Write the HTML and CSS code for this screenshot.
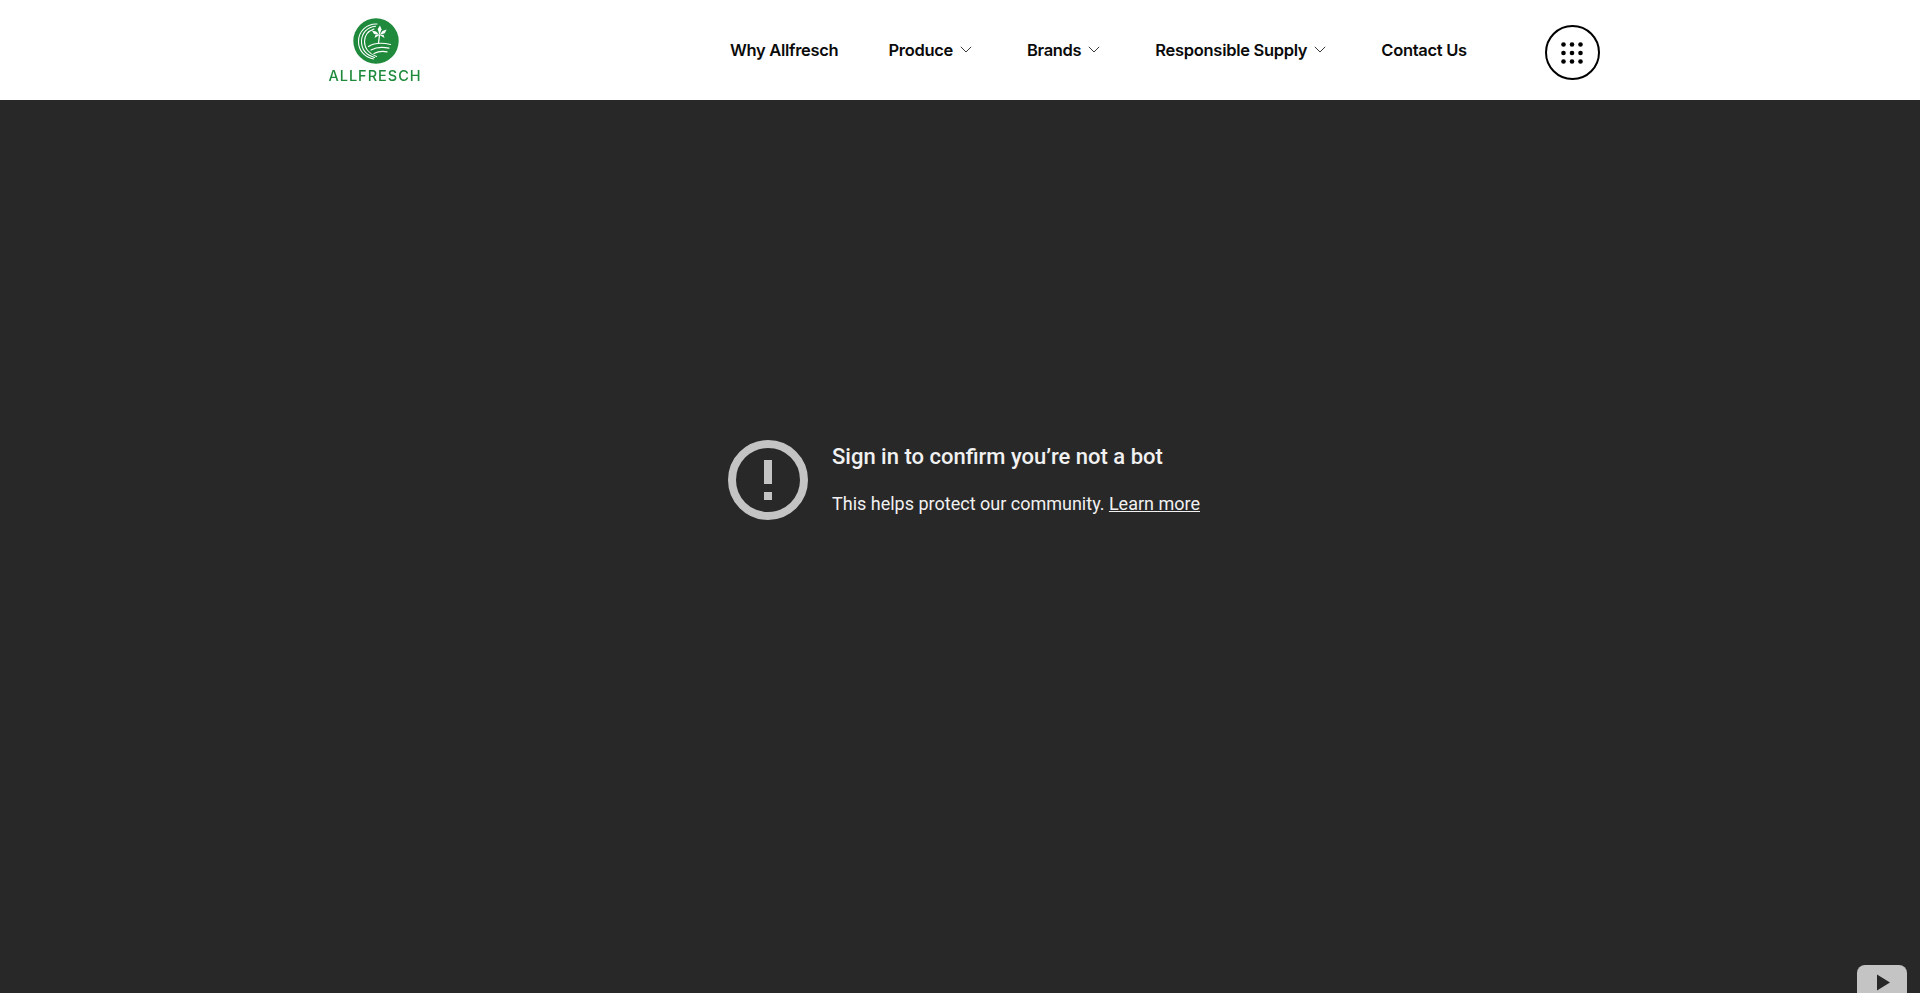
FILE: index.html
```html
<!DOCTYPE html>
<html lang="en">
<head>
<meta charset="utf-8">
<title>Allfresch</title>
<link rel="stylesheet" href="styles.css">
</head>
<body>
<header class="site-header">
  <a class="logo" href="#">
    <svg class="logo-mark" viewBox="0 0 46 46" aria-hidden="true">
      <circle cx="23" cy="23" r="22.7" fill="#1f8a3c"/>
      <g fill="none" stroke="#fff" stroke-linecap="round">
        <path d="M24 6C14 5.500 5.500 13 5.500 23.500c0 9 6 15.500 15 17.500" stroke-width="1.100"/>
        <path d="M22.500 8.200C14.500 9 8.500 15 8.500 23.500c0 8 5 13.500 13 16" stroke-width="1.100"/>
        <path d="M21 11C15 13 11.500 17.500 11.500 23.500c0 7 5 12.500 12 15" stroke-width="1.100"/>
        <path d="M15.500 28.500C21 25 29 24.500 37.500 26.500" stroke-width="1.200"/>
        <path d="M18 32C23 29.300 30 29 36 30.200" stroke-width="1.200"/>
        <path d="M21 35.500C25 33.400 29.500 33 34 33.800" stroke-width="1.200"/>
        <path d="M25.500 25 26.500 17" stroke-width="1.200"/>
      </g>
      <g fill="#fff">
        <path d="M26.500 17l-1.800-6 2.300-3.500 1.500 3.800z"/>
        <path d="M26.500 17l-5.500-1-2.200-3.600 4.300 1z"/>
        <path d="M26.500 17l5.300-1.800 1.800-3.600-4.200 1.400z"/>
        <path d="M26.500 17l-5 3 1-3.200z"/>
        <path d="M26.500 17l5 3-1-3.200z"/>
      </g>
    </svg>
    <span class="logo-word">ALLFRESCH</span>
  </a>
  <nav class="main-nav">
    <a class="nav-link" href="#">Why Allfresch</a>
    <a class="nav-link has-menu" href="#">Produce
      <svg class="chev" viewBox="0 0 12 7" aria-hidden="true"><path d="M.8.8 6 6l5.200-5.200"/></svg></a>
    <a class="nav-link has-menu" href="#">Brands
      <svg class="chev" viewBox="0 0 12 7" aria-hidden="true"><path d="M.8.8 6 6l5.200-5.200"/></svg></a>
    <a class="nav-link has-menu" href="#">Responsible Supply
      <svg class="chev" viewBox="0 0 12 7" aria-hidden="true"><path d="M.8.8 6 6l5.200-5.200"/></svg></a>
    <a class="nav-link" href="#">Contact Us</a>
  </nav>
  <button class="menu-btn" type="button" aria-label="Menu">
    <svg viewBox="0 0 22 22" aria-hidden="true">
      <g fill="#000">
        <circle cx="2.500" cy="2.500" r="2.300"/><circle cx="11" cy="2.500" r="2.300"/><circle cx="19.500" cy="2.500" r="2.300"/>
        <circle cx="2.500" cy="11" r="2.300"/><circle cx="11" cy="11" r="2.300"/><circle cx="19.500" cy="11" r="2.300"/>
        <circle cx="2.500" cy="19.500" r="2.300"/><circle cx="11" cy="19.500" r="2.300"/><circle cx="19.500" cy="19.500" r="2.300"/>
      </g>
    </svg>
  </button>
</header>
<main class="player">
  <div class="error">
    <svg class="error-icon" viewBox="0 0 80 80" aria-hidden="true">
      <circle cx="40" cy="40" r="36" fill="none" stroke="#c4c4c4" stroke-width="8"/>
      <rect x="36" y="20" width="8" height="24" fill="#c4c4c4"/>
      <rect x="36" y="52" width="8" height="8" fill="#c4c4c4"/>
    </svg>
    <div class="error-text">
      <h1 class="error-title">Sign in to confirm you’re not a bot</h1>
      <p class="error-sub">This helps protect our community. <a href="#">Learn more</a></p>
    </div>
  </div>
  <svg class="yt-mark" viewBox="0 0 50 35" aria-hidden="true">
    <rect width="50" height="35" rx="8" fill="#c4c4c4"/>
    <path d="M20 9.500 33 17.500 20 25.500z" fill="#282828"/>
  </svg>
</main>
</body>
</html>
```
FILE: styles.css
```css
* { box-sizing: border-box; }
html, body { margin: 0; height: 100%; overflow: hidden; }
body { background: #282828; font-family: Roboto, "Liberation Sans", sans-serif; }

.site-header {
  height: 100px;
  background: #fff;
  display: flex;
  align-items: flex-start;
  padding: 18px 0 0 329px;
}
.logo {
  width: 92px;
  display: flex;
  flex-direction: column;
  align-items: center;
  text-decoration: none;
  filter: blur(.3px);
}
.logo-mark { width: 46px; height: 46px; display: block; margin-left: 2px; }
.logo-word {
  font-family: Inter, Lato, sans-serif;
  font-weight: 500;
  font-size: 14.500px;
  line-height: 18px;
  letter-spacing: 1px;
  color: #1f8a3c;
  margin-top: 3px;
  white-space: nowrap;
}
.main-nav {
  display: flex;
  align-items: center;
  height: 36px;
  margin: 13.500px 0 0 309px;
  gap: 50px;
}
.nav-link {
  display: flex;
  align-items: center;
  gap: 6px;
  font-family: Inter, "Liberation Sans", sans-serif;
  font-weight: 600;
  font-size: 16.500px;
  letter-spacing: -.3px;
  color: #0b0b0b;
  text-decoration: none;
  white-space: nowrap;
}
.has-menu { margin-right: 5px; }
.chev { width: 12px; height: 7px; fill: none; stroke: #222; stroke-width: .9; margin-left: 1px; }
.menu-btn {
  width: 55px;
  height: 55px;
  margin: 7px 0 0 78px;
  padding: 0;
  background: #fff;
  border: 2px solid #000;
  border-radius: 50%;
  display: flex;
  align-items: center;
  justify-content: center;
}
.menu-btn svg { width: 22px; height: 22px; display: block; }

.player {
  position: relative;
  height: 893px;
  padding: 340px 0 0 728px;
  overflow: hidden;
}
.error { display: flex; gap: 24px; }
.error-icon { width: 80px; height: 80px; flex: none; }
.error-text { padding-top: 3px; }
.error-title {
  margin: 0;
  font-weight: 500;
  font-size: 22px;
  line-height: 28px;
  color: #f1f1f1;
  white-space: nowrap;
}
.error-sub {
  margin: 20px 0 0;
  font-size: 18px;
  line-height: 26px;
  color: #f1f1f1;
  white-space: nowrap;
}
.error-sub a { color: #f1f1f1; }
.yt-mark {
  position: absolute;
  left: 1857px;
  top: 865px;
  width: 50px;
  height: 35px;
}
```
